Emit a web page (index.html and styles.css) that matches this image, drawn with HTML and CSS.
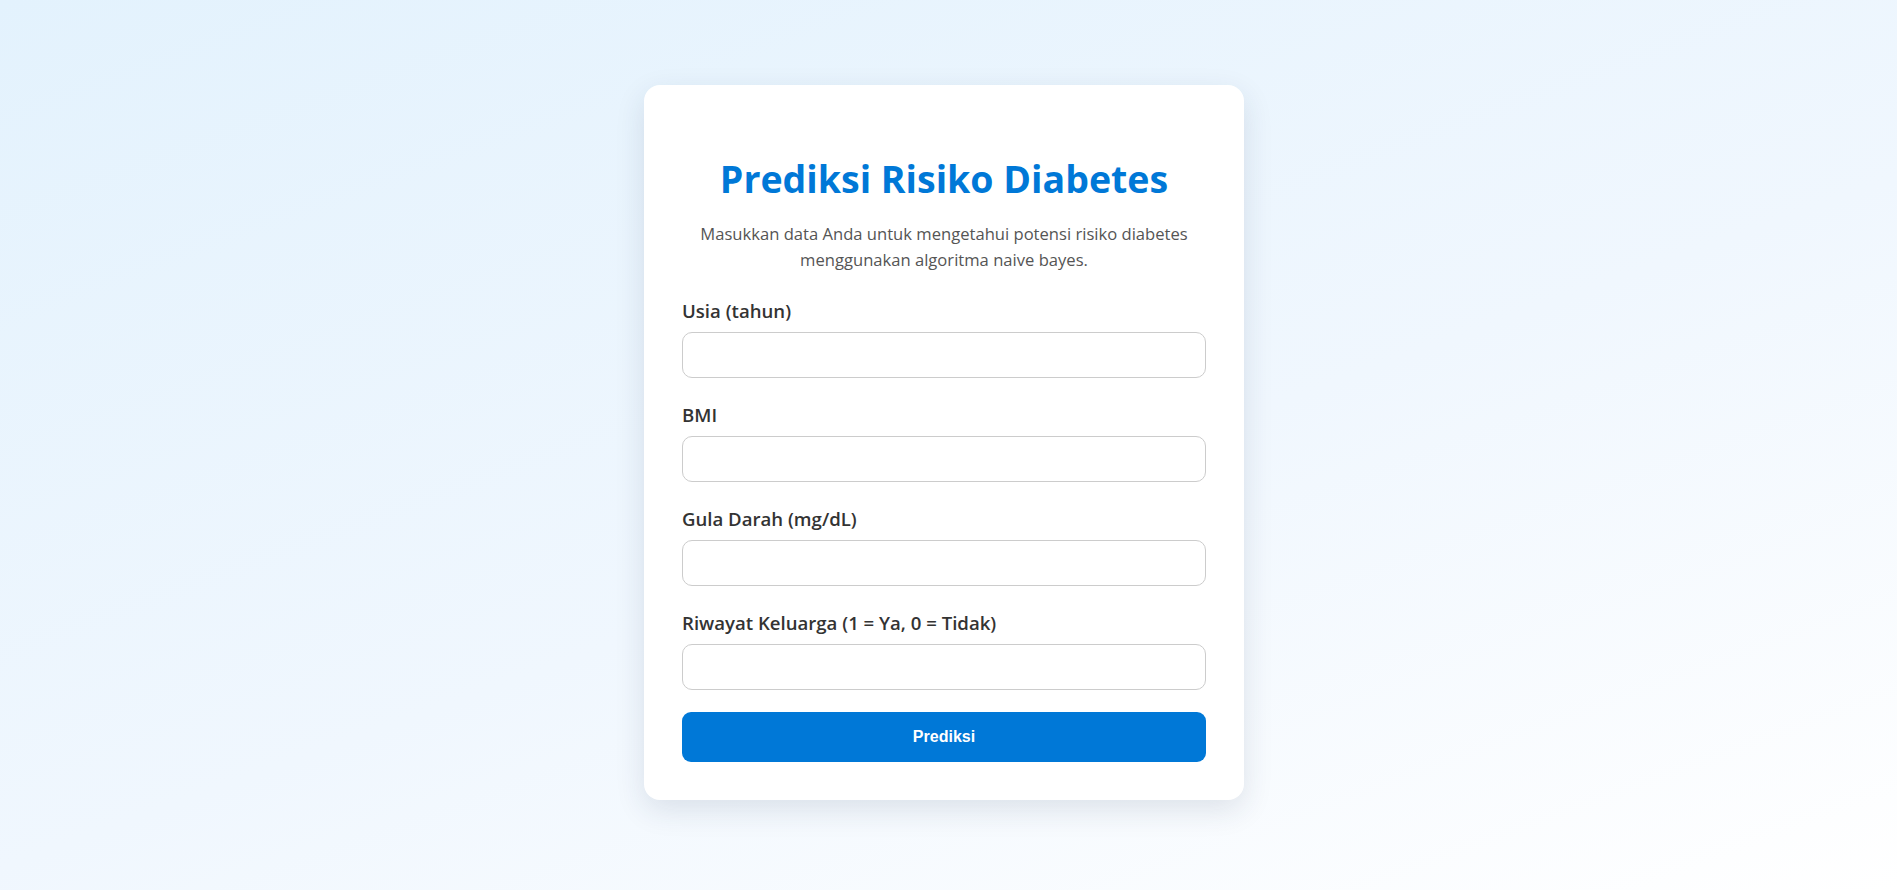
FILE: index.html
```html
<!DOCTYPE html>
<html lang="id">
<head>
<meta charset="utf-8">
<title>Prediksi Risiko Diabetes</title>
<link rel="stylesheet" href="styles.css">
</head>
<body>
<main class="card">
  <h1 class="title">Prediksi Risiko Diabetes</h1>
  <p class="subtitle">Masukkan data Anda untuk mengetahui potensi risiko diabetes menggunakan algoritma naive bayes.</p>
  <form class="form">
    <div class="field">
      <label class="label" for="usia">Usia (tahun)</label>
      <input class="input" type="number" id="usia" name="usia">
    </div>
    <div class="field">
      <label class="label" for="bmi">BMI</label>
      <input class="input" type="number" id="bmi" name="bmi">
    </div>
    <div class="field">
      <label class="label" for="gula">Gula Darah (mg/dL)</label>
      <input class="input" type="number" id="gula" name="gula">
    </div>
    <div class="field">
      <label class="label" for="riwayat">Riwayat Keluarga (1 = Ya, 0 = Tidak)</label>
      <input class="input" type="number" id="riwayat" name="riwayat">
    </div>
    <button class="button" type="submit">Prediksi</button>
  </form>
</main>
</body>
</html>
```

FILE: styles.css
```css
* {
  box-sizing: border-box;
}

html, body {
  margin: 0;
  padding: 0;
}

body {
  min-height: 100vh;
  display: flex;
  align-items: center;
  justify-content: center;
  padding-right: 9px;
  padding-bottom: 5px;
  background: linear-gradient(160deg, #e3f2fd 0%, #f0f7fe 55%, #ffffff 100%);
  font-family: "Open Sans", "Noto Sans", sans-serif;
}

.card {
  width: 600px;
  background: #ffffff;
  border-radius: 16px;
  padding: 38px 38px 38px;
  box-shadow: 0 10px 30px rgba(30, 50, 80, 0.12);
}

.title {
  margin: 32px 0 0;
  font-size: 37.5px;
  line-height: 48px;
  font-weight: 700;
  color: #0078d7;
  text-align: center;
}

.subtitle {
  margin: 18px 0 0;
  font-size: 16.6px;
  line-height: 25.5px;
  color: #555555;
  text-align: center;
}

.form {
  margin-top: 27px;
  display: flex;
  flex-direction: column;
}

.field {
  display: flex;
  flex-direction: column;
  margin-bottom: 25px;
}

.field:last-of-type {
  margin-bottom: 22px;
}

.label {
  font-size: 18.6px;
  line-height: 24px;
  font-weight: 600;
  color: #333333;
  margin-bottom: 9px;
}

.input {
  height: 46px;
  border: 1px solid #cccccc;
  border-radius: 10px;
  padding: 0 14px;
  font-size: 16px;
  background: #ffffff;
}

.button {
  height: 50px;
  border: none;
  border-radius: 9px;
  background: #0078d7;
  color: #ffffff;
  font-family: "Liberation Sans", Arial, sans-serif;
  font-size: 16px;
  font-weight: 700;
  cursor: pointer;
}
```
